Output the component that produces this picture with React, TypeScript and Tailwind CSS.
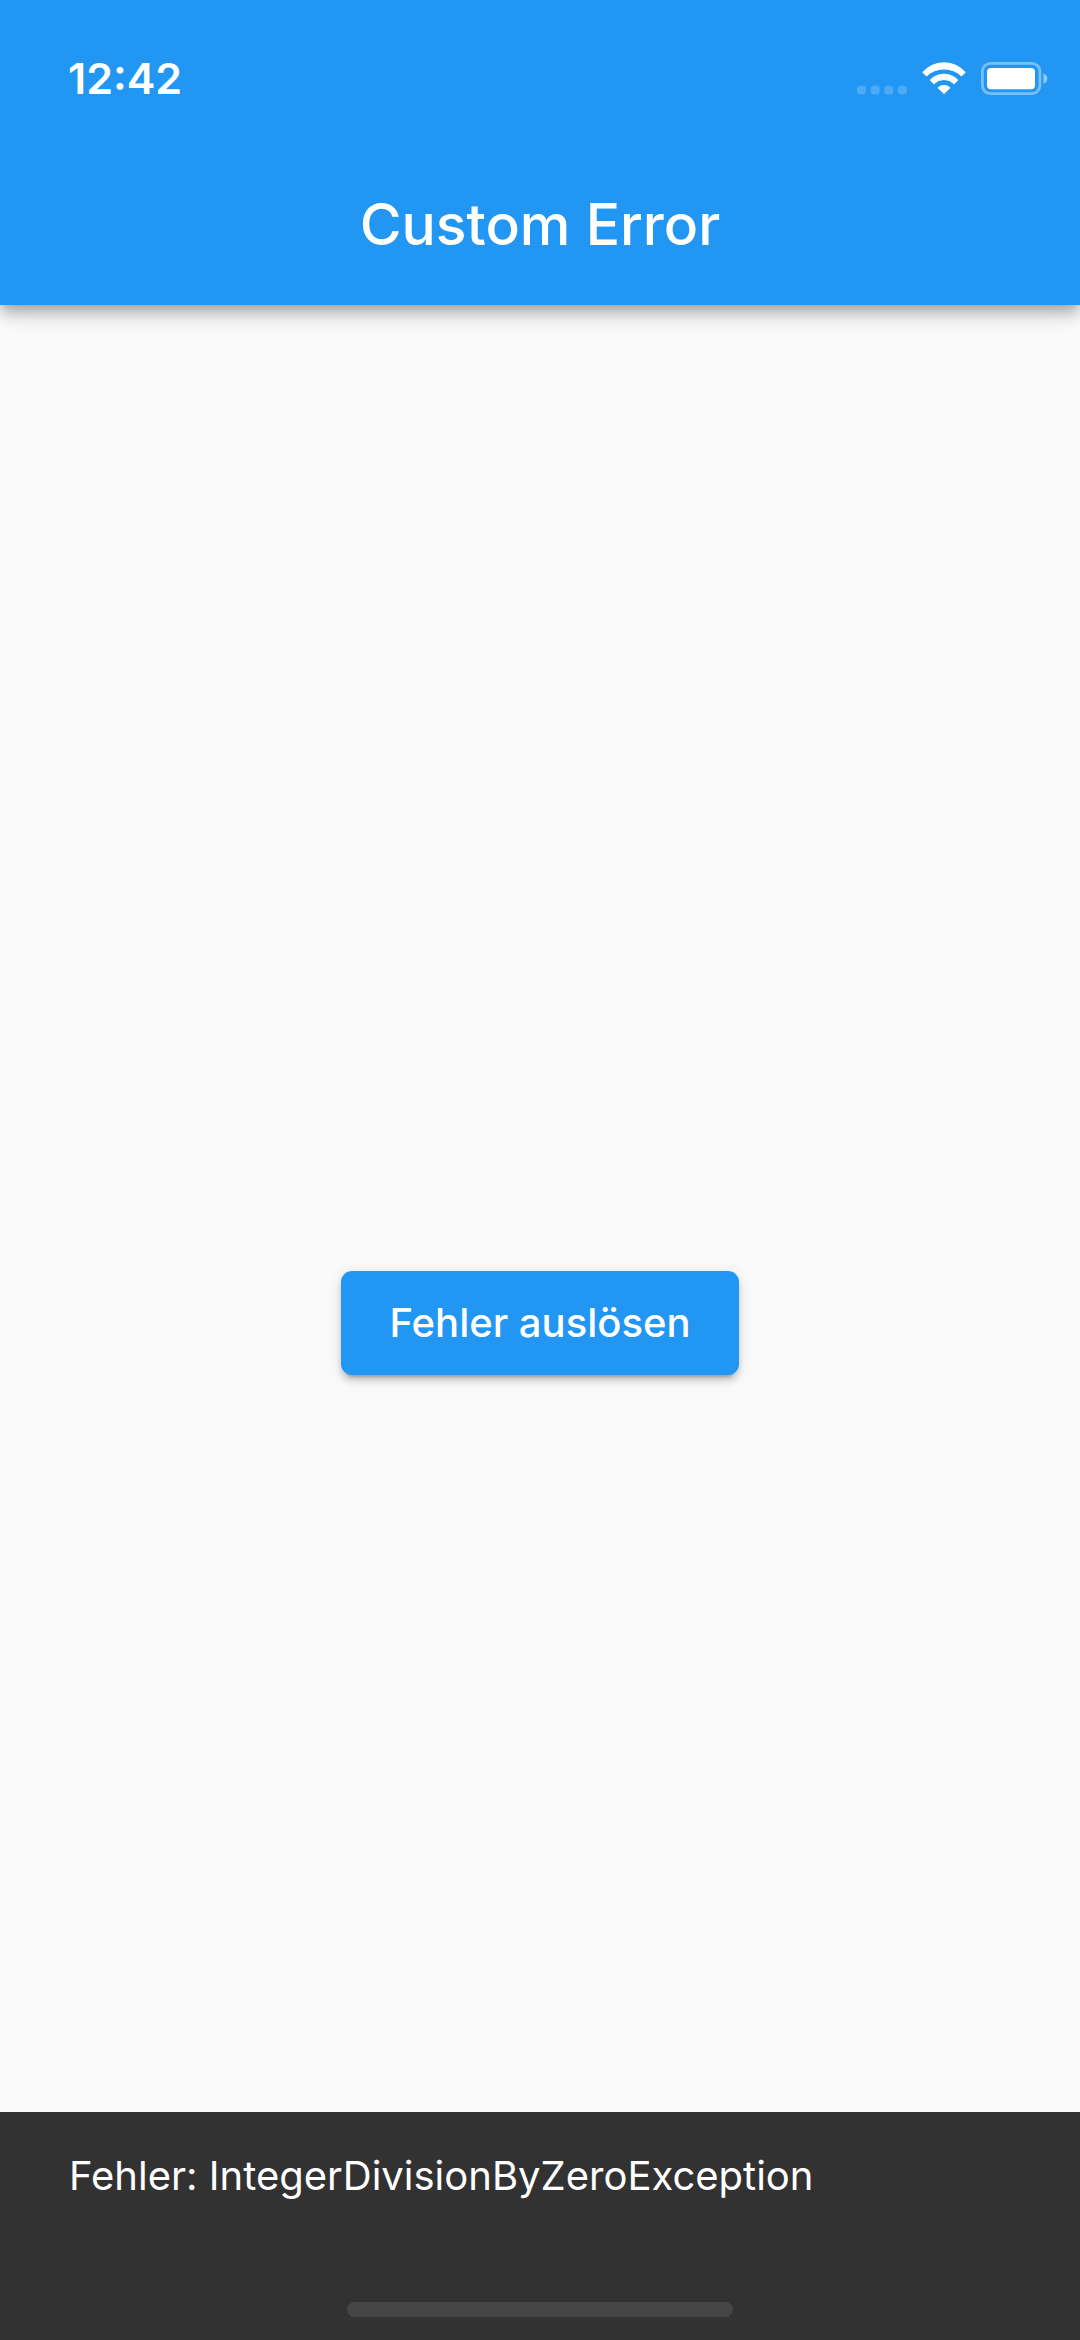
export default function App() {
  return (
    <div className="relative flex min-h-screen flex-col bg-[#fafafa] font-['Inter',sans-serif] text-white">
      <header className="z-10 bg-[#2196f3] shadow-[0_6px_11px_-3px_rgba(0,0,0,0.2),0_11px_14px_0_rgba(0,0,0,0.14),0_3px_28px_0_rgba(0,0,0,0.12)]">
        <div className="flex h-39 items-center justify-between pr-8 pl-17">
          <time className="text-[43px] font-semibold">12:42</time>
          <div className="flex items-center gap-[15px]">
            <svg width="50" height="34" viewBox="0 0 50 34" fill="#fff" fillOpacity=".2" aria-hidden="true">
              <rect x="0" y="24.500" width="9" height="9" rx="3.500" />
              <rect x="13.600" y="24.500" width="9" height="9" rx="3.500" />
              <rect x="27.200" y="24.500" width="9" height="9" rx="3.500" />
              <rect x="40.800" y="24.500" width="9" height="9" rx="3.500" />
            </svg>
            <svg width="44" height="34" viewBox="0 0 44 34" fill="#fff" stroke="#fff" strokeWidth="1" strokeLinejoin="round" aria-hidden="true">
              <path d="M.7 11.300A28.600 28.600 0 0 1 43.300 11.300L39.500 14.900A25.500 25.500 0 0 0 4.500 14.900Z" />
              <path d="M8.200 19.100A19 19 0 0 1 35.800 19.100L32.100 22.800A14 14 0 0 0 11.900 22.800Z" />
              <path d="M15.900 26.700A9.500 9.500 0 0 1 28.100 26.700L22 32.600Z" />
            </svg>
            <svg width="67" height="34" viewBox="0 0 67 34" fill="#fff" aria-hidden="true">
              <rect x="1.400" y="2.400" width="57.500" height="30.200" rx="8" fill="none" stroke="#fff" strokeOpacity=".4" strokeWidth="2.800" />
              <rect x="6" y="7" width="48" height="21.300" rx="4" />
              <path d="M62.500 12.500C67.500 14.500 67.500 20.800 62.500 22.800Z" fillOpacity=".5" />
            </svg>
          </div>
        </div>
        <h1 className="flex h-[149px] items-center justify-center pb-3 text-[57px] font-medium">Custom Error</h1>
      </header>
      <main className="flex flex-1 items-center justify-center">
        <button className="h-26 rounded-[11px] bg-[#2196f3] px-12 text-[40px] font-medium shadow-[0_8px_3px_-6px_rgba(0,0,0,0.2),0_6px_6px_0_rgba(0,0,0,0.14),0_3px_14px_0_rgba(0,0,0,0.12)]">
          Fehler auslösen
        </button>
      </main>
      <div role="status" className="absolute inset-x-0 bottom-0 flex h-57 flex-col items-center justify-between bg-[#323232]">
        <p className="w-full px-[69px] pt-[34px] text-[40px]">Fehler: IntegerDivisionByZeroException</p>
        <div className="mb-[23px] h-[15px] w-[386px] rounded-full bg-[#464646]" />
      </div>
    </div>
  );
}
